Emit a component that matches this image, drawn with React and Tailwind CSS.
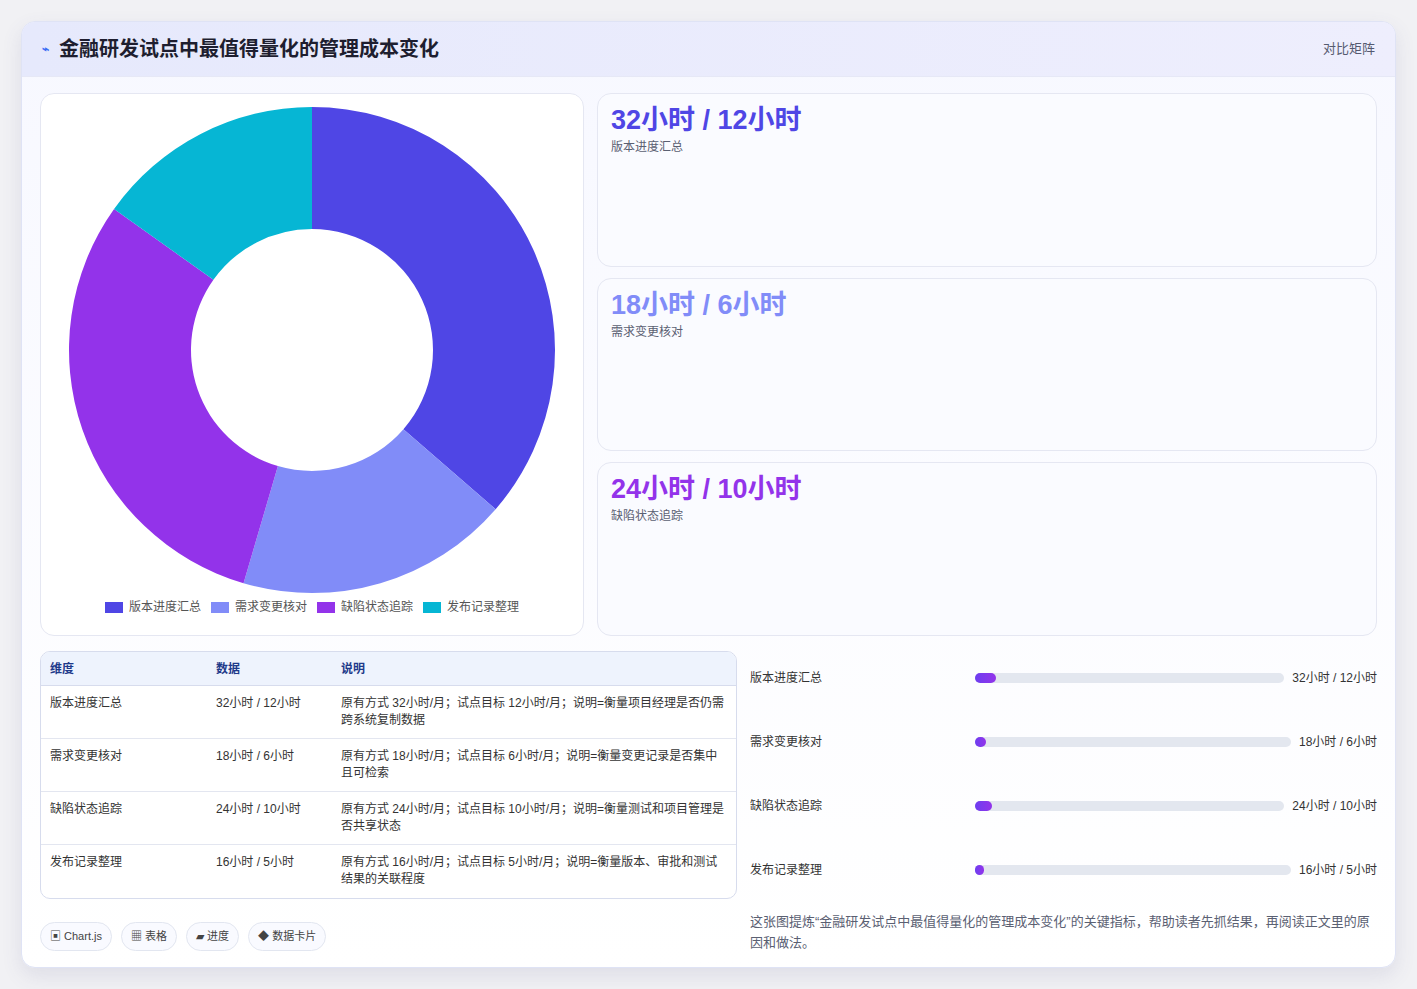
import React from "react";

const data = [
  { name: "版本进度汇总", v: "32小时 / 12小时", a: 32, b: 12, color: "#4f46e5", desc: "原有方式 32小时/月；试点目标 12小时/月；说明=衡量项目经理是否仍需跨系统复制数据" },
  { name: "需求变更核对", v: "18小时 / 6小时", a: 18, b: 6, color: "#818cf8", desc: "原有方式 18小时/月；试点目标 6小时/月；说明=衡量变更记录是否集中且可检索" },
  { name: "缺陷状态追踪", v: "24小时 / 10小时", a: 24, b: 10, color: "#9333ea", desc: "原有方式 24小时/月；试点目标 10小时/月；说明=衡量测试和项目管理是否共享状态" },
  { name: "发布记录整理", v: "16小时 / 5小时", a: 16, b: 5, color: "#06b6d4", desc: "原有方式 16小时/月；试点目标 5小时/月；说明=衡量版本、审批和测试结果的关联程度" },
];

function Donut() {
  const cx = 272, cy = 256, R = 243, r = 121;
  const total = data.reduce((s, d) => s + d.b, 0);
  let ang = -Math.PI / 2;
  const paths = data.map((d) => {
    const a0 = ang, a1 = ang + (d.b / total) * Math.PI * 2;
    ang = a1;
    const large = a1 - a0 > Math.PI ? 1 : 0;
    const p = (rad, a) => [cx + rad * Math.cos(a), cy + rad * Math.sin(a)];
    const [x0, y0] = p(R, a0), [x1, y1] = p(R, a1), [x2, y2] = p(r, a1), [x3, y3] = p(r, a0);
    return <path key={d.name} d={`M${x0} ${y0}A${R} ${R} 0 ${large} 1 ${x1} ${y1}L${x2} ${y2}A${r} ${r} 0 ${large} 0 ${x3} ${y3}Z`} fill={d.color} />;
  });
  return <svg width="544" height="500" viewBox="0 0 544 500">{paths}</svg>;
}

export default function App() {
  const font = { fontFamily: '"Liberation Sans","Noto Sans CJK SC",sans-serif' };
  return (
    <div className="min-h-[989px] bg-[#f1f1f4] px-[21px] pt-[21px] pb-[20px]" style={font}>
      <div className="rounded-[14px] border border-[#dfe3f5] bg-gradient-to-b from-[#f7f8ff] to-white shadow-[0_8px_20px_rgba(80,80,140,0.12)] overflow-hidden">
        <div className="h-[55px] flex items-center justify-between px-[20px] bg-gradient-to-r from-[#e6e9fc] to-[#eeeefd] border-b border-[#e6e8f6]">
          <div className="flex items-center gap-[10px]">
            <span className="text-[#3b6ef5] text-[12px] font-bold">⌁</span>
            <span className="text-[20px] font-bold text-[#1e1e2f]">金融研发试点中最值得量化的管理成本变化</span>
          </div>
          <span className="text-[13px] text-[#555a70]">对比矩阵</span>
        </div>
        <div className="px-[18px] pt-[16px]">
          <div className="flex gap-[13px] h-[543px]">
            <div className="w-[544px] shrink-0 rounded-[14px] border border-[#e5e7f2] bg-white flex flex-col items-center pt-[0px]">
              <Donut />
              <div className="flex gap-[10px] text-[12px] text-[#555] mt-[4px]">
                {data.map((d) => (
                  <div key={d.name} className="flex items-center gap-[6px]">
                    <span className="w-[18px] h-[11px] inline-block" style={{ background: d.color }} />
                    {d.name}
                  </div>
                ))}
              </div>
            </div>
            <div className="flex-1 flex flex-col gap-[11px]">
              {data.slice(0, 3).map((d) => (
                <div key={d.name} className="flex-1 rounded-[14px] border border-[#e5e7f2] bg-[#fafbff] px-[13px] pt-[10px]">
                  <div className="text-[27px] font-bold leading-[32px]" style={{ color: d.color }}>{d.v}</div>
                  <div className="text-[12px] text-[#5a6072] mt-[2px]">{d.name}</div>
                </div>
              ))}
            </div>
          </div>
          <div className="flex gap-[13px] mt-[15px]">
            <div className="w-[697px] shrink-0">
              <div className="rounded-[10px] border border-[#d7dced] overflow-hidden bg-white">
                <div className="grid grid-cols-[166px_125px_1fr] bg-[#eef3fd] h-[34px] items-center px-[9px] text-[12px] font-bold text-[#1e3a8a] border-b border-[#d7dced]">
                  <span>维度</span><span>数据</span><span>说明</span>
                </div>
                {data.map((d, i) => (
                  <div key={d.name} className={`grid grid-cols-[166px_125px_1fr] px-[9px] pt-[9px] h-[53px] text-[12px] leading-[17px] text-[#333] ${i < 3 ? "border-b border-[#e3e6f0]" : ""}`}>
                    <span>{d.name}</span><span>{d.v}</span><span className="pr-[2px]">{d.desc}</span>
                  </div>
                ))}
              </div>
              <div className="flex gap-[9px] mt-[23px] text-[11px] text-[#444]">
                {["▣ Chart.js", "▦ 表格", "▰ 进度", "◆ 数据卡片"].map((t) => (
                  <span key={t} className="h-[29px] px-[9px] rounded-full border border-[#e2e6f0] bg-[#f9faff] flex items-center">{t}</span>
                ))}
              </div>
            </div>
            <div className="flex-1 flex flex-col">
              <div className="flex flex-col gap-[47px] pt-[18px]">
                {data.map((d) => (
                  <div key={d.name} className="flex items-center h-[17px] text-[12px] text-[#333]">
                    <span className="w-[225px] shrink-0">{d.name}</span>
                    <div className="flex-1 h-[10px] rounded-full bg-[#e3e7ef] mr-[8px]">
                      <div className="h-full rounded-full bg-gradient-to-r from-[#6d3df0] to-[#9333ea]" style={{ width: `${(d.b / 180) * 100}%` }} />
                    </div>
                    <span className="shrink-0">{d.v}</span>
                  </div>
                ))}
              </div>
              <p className="mt-[33px] text-[13px] leading-[21px] text-[#5a6072]">这张图提炼“金融研发试点中最值得量化的管理成本变化”的关键指标，帮助读者先抓结果，再阅读正文里的原因和做法。</p>
            </div>
          </div>
          <div className="h-[14px]" />
        </div>
      </div>
    </div>
  );
}
